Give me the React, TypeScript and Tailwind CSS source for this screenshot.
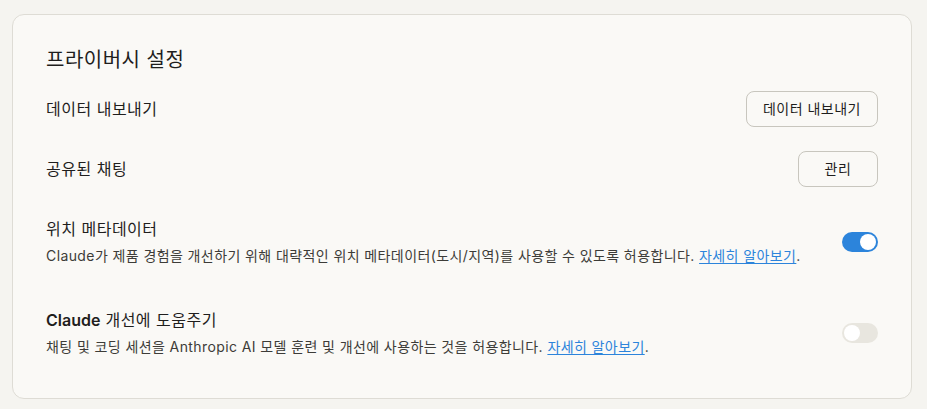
import { useState } from "react";

const font = {
  fontFamily:
    '"Inter", "Noto Sans CJK KR", "Noto Sans", sans-serif',
};

function Toggle({ on, onClick }: { on: boolean; onClick: () => void }) {
  return (
    <button
      type="button"
      onClick={onClick}
      className={`relative h-5 w-9 shrink-0 rounded-full transition-colors ${
        on ? "bg-[#2c84db]" : "bg-[#e8e6df]"
      }`}
    >
      <span
        className={`absolute top-0.5 h-4 w-4 rounded-full bg-white transition-all ${
          on ? "left-[18px]" : "left-0.5"
        }`}
      />
    </button>
  );
}

export default function App() {
  const [location, setLocation] = useState(true);
  const [improve, setImprove] = useState(false);

  return (
    <div
      className="min-h-screen bg-[#f5f4f0] pl-3 pr-[15px] pt-[14px] pb-[9px] text-[#1f1e1d] tracking-[0.5px]"
      style={font}
    >
      <div className="rounded-xl border border-[#dedcd5] bg-[#faf9f6] pl-[33px] pr-[33px] pt-[31px] pb-[41px]">
        <h2 className="text-xl leading-7 font-normal">프라이버시 설정</h2>

        <div className="mt-[17px] flex items-center justify-between">
          <span className="text-base">데이터 내보내기</span>
          <button
            type="button"
            className="h-9 rounded-lg border border-[#c8c6be] px-4 text-sm hover:bg-[#f0eee8]"
          >
            데이터 내보내기
          </button>
        </div>

        <div className="mt-6 flex items-center justify-between">
          <span className="text-base">공유된 채팅</span>
          <button
            type="button"
            className="h-9 w-20 rounded-lg border border-[#c8c6be] text-sm hover:bg-[#f0eee8]"
          >
            관리
          </button>
        </div>

        <div className="mt-[30px] flex items-center justify-between gap-6">
          <div>
            <div className="text-base leading-6">위치 메타데이터</div>
            <p className="mt-[5px] text-sm leading-5 tracking-[0.4px] text-[#3d3c38]">
              Claude가 제품 경험을 개선하기 위해 대략적인 위치 메타데이터(도시/지역)를 사용할 수 있도록 허용합니다.{" "}
              <a href="#" className="text-[#2c84db] underline underline-offset-2">
                자세히 알아보기
              </a>
              .
            </p>
          </div>
          <Toggle on={location} onClick={() => setLocation(!location)} />
        </div>

        <div className="mt-[42px] flex items-center justify-between gap-6">
          <div>
            <div className="text-base leading-6">
              <span className="font-semibold tracking-normal">Claude</span> 개선에 도움주기
            </div>
            <p className="mt-[5px] text-sm leading-5 tracking-[0.4px] text-[#3d3c38]">
              채팅 및 코딩 세션을 Anthropic AI 모델 훈련 및 개선에 사용하는 것을 허용합니다.{" "}
              <a href="#" className="text-[#2c84db] underline underline-offset-2">
                자세히 알아보기
              </a>
              .
            </p>
          </div>
          <Toggle on={improve} onClick={() => setImprove(!improve)} />
        </div>
      </div>
    </div>
  );
}
